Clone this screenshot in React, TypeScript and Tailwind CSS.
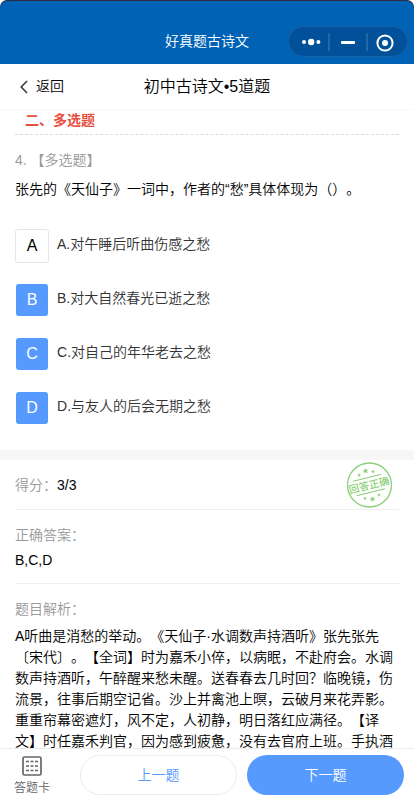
import React from 'react';
import { clsx } from 'clsx';

interface Option {
    key: string;
    text: string;
    selected: boolean;
}

const options: Option[] = [
    { key: 'A', text: '对午睡后听曲伤感之愁', selected: false },
    { key: 'B', text: '对大自然春光已逝之愁', selected: true },
    { key: 'C', text: '对自己的年华老去之愁', selected: true },
    { key: 'D', text: '与友人的后会无期之愁', selected: true },
];

const analysis = [
    'A听曲是消愁的举动。《天仙子·水调数声持酒听》张先张先',
    '〔宋代〕。【全词】时为嘉禾小倅，以病眠，不赴府会。水调',
    '数声持酒听，午醉醒来愁未醒。送春春去几时回？临晚镜，伤',
    '流景，往事后期空记省。沙上并禽池上暝，云破月来花弄影。',
    '重重帘幕密遮灯，风不定，人初静，明日落红应满径。【译',
    '文】时任嘉禾判官，因为感到疲惫，没有去官府上班。手执酒',
];

// Mini program capsule: more / minimise / close
const Capsule: React.FC = () => (
    <svg className="block" width="121" height="33" viewBox="0 0 121 33" fill="none">
        <rect x="0.5" y="1.5" width="119" height="30" rx="15" fill="#00519a" stroke="#1a61a7" />
        <g fill="#fff">
            <circle cx="16" cy="17" r="2" />
            <circle cx="23.2" cy="17" r="3.2" />
            <circle cx="30.4" cy="17" r="2" />
            <rect x="53" y="16" width="14" height="3" rx="1" />
            <circle cx="97" cy="18" r="3" />
        </g>
        <path d="M41 8v18M79 8v18" stroke="#286da9" strokeWidth="1.6" />
        <circle cx="97" cy="18" r="7.6" stroke="#fff" strokeWidth="2" />
    </svg>
);

const star = 'M0-3 .8-1 3-.9 1.3.4 1.9 2.5 0 1.3-1.9 2.5-1.3.4-3-.9-.8-1Z';

// Round "answered correctly" stamp
const Stamp: React.FC = () => (
    <svg className="block" width="48" height="48" viewBox="0 0 48 48" fill="none">
        <circle cx="24.5" cy="24" r="22" stroke="#8bcf78" strokeWidth="1.3" />
        <g transform="rotate(-14 24 24)">
            <path d="M9.5 16.5h29M9.5 31.5h29" stroke="#8bcf78" strokeWidth="1.1" />
            <g fill="#8bcf78">
                <path d={star} transform="translate(24 9.5)" />
                <path d={star} transform="translate(16.8 12) scale(.65)" />
                <path d={star} transform="translate(31.2 12) scale(.65)" />
                <path d={star} transform="translate(24 38.5)" />
                <path d={star} transform="translate(16.8 36) scale(.65)" />
                <path d={star} transform="translate(31.2 36) scale(.65)" />
            </g>
            <text x="24" y="28" textAnchor="middle" fontSize="10.3" fontWeight="500" fill="#8bcf78">
                回答正确
            </text>
        </g>
    </svg>
);

const CardIcon: React.FC = () => (
    <svg className="block" width="20" height="20" viewBox="0 0 20 20" fill="none" stroke="#64666b">
        <rect x="1" y="1" width="18" height="18" rx="1.5" strokeWidth="1.7" />
        <path
            d="M4 5.5h3M8.5 5.5h3M13 5.5h3M4 10h3M8.5 10h3M13 10h3M4 14.5h3M8.5 14.5h3M13 14.5h3"
            strokeWidth="1.4"
        />
    </svg>
);

const App: React.FC = () => {
    return (
        <div className="h-[800px] w-[414px] overflow-hidden bg-white text-[14px] leading-[21px] font-[350] text-black [font-family:'Liberation_Sans','Noto_Sans_CJK_SC',sans-serif] [text-spacing-trim:space-all]">
            <div className="flex h-full flex-col overflow-hidden">
                {/* Title bar */}
                <div className="h-16 shrink-0 rounded-t-[7px] bg-[#2b2b40] pt-px">
                    <header className="grid h-[63px] grid-cols-[1fr_auto_1fr] rounded-t-[7px] bg-[#0062b4] text-white">
                        <span />
                        <h1 className="pt-[30px] font-[350]">好真题古诗文</h1>
                        <div className="flex justify-end pt-6 pr-[5px]">
                            <Capsule />
                        </div>
                    </header>
                </div>

                {/* Page navigation */}
                <nav className="grid h-[46px] shrink-0 grid-cols-[1fr_auto_1fr] items-center border-b border-[#f7f7f7] bg-white">
                    <button className="flex items-center pl-5">
                        <svg width="8" height="14" viewBox="0 0 8 14" fill="none" stroke="#333" strokeWidth="1.5">
                            <path d="M7 1 1.2 7 7 13" />
                        </svg>
                        <span className="ml-2">返回</span>
                    </button>
                    <h2 className="text-base font-[350]">初中古诗文•5道题</h2>
                    <span />
                </nav>

                <main className="min-h-0 flex-1 overflow-hidden bg-white">
                    <section className="h-[340px] px-[15px]">
                        <h3 className="h-[25px] border-b border-dashed border-[#dcdcdc] pl-[10px] font-bold text-[#e94f40]">
                            二、多选题
                        </h3>
                        <p className="mt-[15px] text-[#999]">4. 【多选题】</p>
                        <p className="mt-[8px]">张先的《天仙子》一词中，作者的“愁”具体体现为（）。</p>
                        <ul className="mt-[29px] flex flex-col gap-5">
                            {options.map((option) => (
                                <li key={option.key} className="flex h-[34px] items-center">
                                    <span
                                        className={clsx(
                                            'flex items-center justify-center text-base',
                                            option.selected
                                                ? 'm-px size-8 rounded-[3px] bg-[#5699ff] text-white'
                                                : 'size-[34px] rounded-[3px] border border-[#e4e4e8]'
                                        )}
                                    >
                                        {option.key}
                                    </span>
                                    <span className="ml-2 pb-1 text-[#333]">
                                        {option.key}.{option.text}
                                    </span>
                                </li>
                            ))}
                        </ul>
                    </section>

                    <div className="h-[10px] bg-[#f7f7f7]" />

                    <section className="px-[15px]">
                        <div className="flex h-[50px] justify-between border-b border-[#eee]">
                            <p className="pt-[15px]">
                                <span className="text-[#999]">得分：</span>3/3
                            </p>
                            <div className="pt-px pr-[6px]">
                                <Stamp />
                            </div>
                        </div>
                        <div className="h-[74px] border-b border-[#eee] pt-[15px]">
                            <p className="text-[#999]">正确答案：</p>
                            <p className="mt-[4px]">B,C,D</p>
                        </div>
                        <p className="pt-[15px] text-[#999]">题目解析：</p>
                        <div className="mt-[6px] whitespace-nowrap">
                            {analysis.map((line) => (
                                <p key={line}>{line}</p>
                            ))}
                        </div>
                    </section>
                </main>

                {/* Bottom actions */}
                <footer className="flex h-[52px] shrink-0 border-t border-[#ebebeb] bg-white">
                    <button className="flex w-16 flex-col items-center pt-[7px] text-xs text-[#64666b]">
                        <CardIcon />
                        <span className="mt-[2px] leading-[20px]">答题卡</span>
                    </button>
                    <button className="mt-[6px] ml-4 h-10 w-[157px] rounded-full border border-[#ebebef] text-[#5699ff]">
                        上一题
                    </button>
                    <button className="mt-[6px] ml-[10px] h-10 w-[157px] rounded-full bg-[#5699ff] text-white">
                        下一题
                    </button>
                </footer>
            </div>
        </div>
    );
};

export default App;
